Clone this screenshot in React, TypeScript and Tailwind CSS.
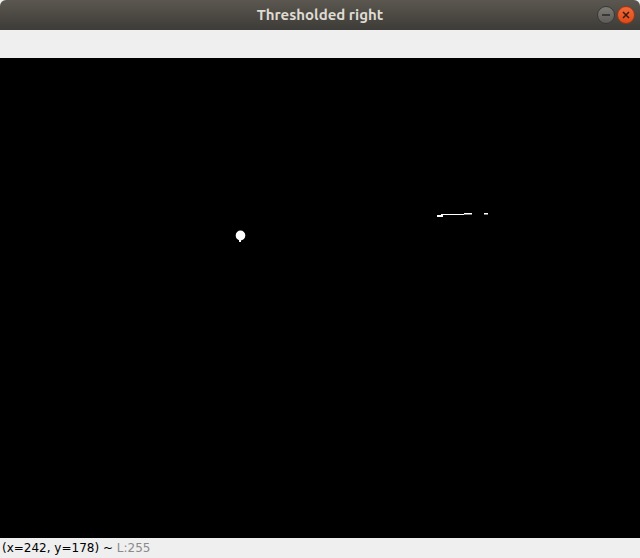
export default function App() {
  return (
    <div className="w-[640px] h-[558px] flex flex-col overflow-hidden bg-[#efefef] font-['DejaVu_Sans',sans-serif]">
      {/* Title bar */}
      <div className="relative h-[30px] shrink-0 flex items-center justify-center rounded-t-[6px] bg-gradient-to-b from-[#5b5750] to-[#3e3c38]">
        <span className="text-[15px] font-bold text-[#dfdbd2] font-['Ubuntu','DejaVu_Sans',sans-serif]">Thresholded right</span>
        <div className="absolute right-[5px] top-[6px] flex items-center gap-[2px]">
          <div className="w-[18px] h-[18px] rounded-full bg-gradient-to-b from-[#7d7b76] to-[#5d5b57] border border-[#3a3834] flex items-center justify-center">
            <div className="w-[8px] h-[2px] bg-[#3a3834]" />
          </div>
          <div className="w-[18px] h-[18px] rounded-full bg-gradient-to-b from-[#f2693a] to-[#dd4b18] border border-[#9e3510] flex items-center justify-center">
            <svg width="8" height="8" viewBox="0 0 8 8">
              <path d="M1 1L7 7M7 1L1 7" stroke="#3c1a0c" strokeWidth="1.5" />
            </svg>
          </div>
        </div>
      </div>

      {/* Toolbar */}
      <div className="h-[28px] shrink-0 bg-[#efefef]" />

      {/* Image canvas */}
      <div className="h-[480px] shrink-0 bg-black">
        <svg width="640" height="480" viewBox="0 0 640 480">
          <g transform="translate(0,-58)" fill="#fff">
            <ellipse cx="240.5" cy="235.5" rx="4.8" ry="5" />
            <rect x="239" y="239" width="2" height="3" />
            <rect x="437" y="215" width="6" height="2" />
            <rect x="441" y="214" width="23" height="1" />
            <rect x="464" y="213" width="8" height="1.5" />
            <rect x="484" y="213" width="4" height="1.5" />
          </g>
        </svg>
      </div>

      {/* Status bar */}
      <div className="h-[20px] shrink-0 flex items-center px-[2px] text-[12px] leading-none bg-[#efefef]">
        <span className="text-black">(x=242, y=178) ~&nbsp;</span>
        <span className="text-[#8a8a8a]">L:255</span>
      </div>
    </div>
  );
}
